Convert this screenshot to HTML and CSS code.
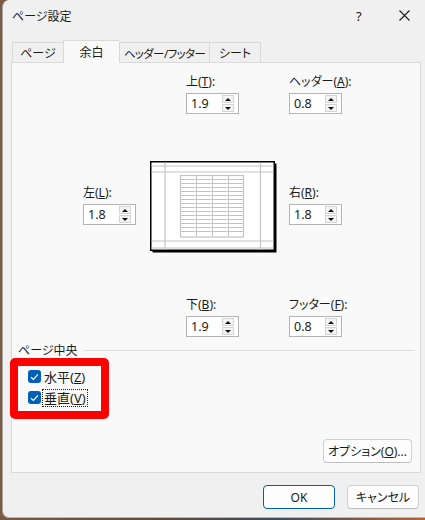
FILE: index.html
```html
<!DOCTYPE html>
<html lang="ja">
<head>
<meta charset="utf-8">
<title>ページ設定</title>
<link rel="stylesheet" href="styles.css">
</head>
<body>
<div class="window">
  <div class="titlebar">
    <span class="title">ページ設定</span>
    <span class="help">?</span>
    <span class="close">
      <svg width="11" height="11" viewBox="0 0 11 11"><path d="M0.5 0.5 L10.5 10.5 M10.5 0.5 L0.5 10.5" stroke="#1a1a1a" stroke-width="1.1" fill="none"/></svg>
    </span>
  </div>

  <div class="tabs">
    <div class="tab tab-page">ページ</div>
    <div class="tab tab-active">余白</div>
    <div class="tab tab-header">ヘッダー/フッター</div>
    <div class="tab tab-sheet">シート</div>
  </div>

  <div class="panel">
    <div class="margins">
      <div class="field f-top">
        <div class="label">上(<u>T</u>):</div>
        <div class="spin"><span class="value">1.9</span><span class="arrows"><span class="btn up"></span><span class="btn down"></span></span></div>
      </div>
      <div class="field f-header">
        <div class="label">ヘッダー(<u>A</u>):</div>
        <div class="spin"><span class="value">0.8</span><span class="arrows"><span class="btn up"></span><span class="btn down"></span></span></div>
      </div>

      <div class="field f-left">
        <div class="label">左(<u>L</u>):</div>
        <div class="spin"><span class="value">1.8</span><span class="arrows"><span class="btn up"></span><span class="btn down"></span></span></div>
      </div>
      <div class="preview">
        <svg width="128" height="92" viewBox="0 0 128 92">
          <rect x="2.5" y="2.5" width="124" height="89" fill="#000"/>
          <rect x="0.75" y="0.75" width="123.5" height="88.5" fill="#fff" stroke="#000" stroke-width="1.5"/>
          <g stroke="#c4c4c4" stroke-width="1.2" fill="none">
            <line x1="1.5" y1="5" x2="123.5" y2="5"/>
            <line x1="1.5" y1="11" x2="123.5" y2="11"/>
            <line x1="1.5" y1="80" x2="123.5" y2="80"/>
            <line x1="1.5" y1="87" x2="123.5" y2="87"/>
            <line x1="15" y1="1.5" x2="15" y2="88.5"/>
            <line x1="110.5" y1="1.5" x2="110.5" y2="88.5"/>
            <rect x="30.5" y="14.5" width="63" height="61.5"/>
          </g>
          <g stroke="#c4c4c4" stroke-width="1" fill="none">
            <line x1="46.5" y1="14.5" x2="46.5" y2="76"/>
            <line x1="62.5" y1="14.5" x2="62.5" y2="76"/>
            <line x1="78.5" y1="14.5" x2="78.5" y2="76"/>
            <line x1="30.5" y1="18.5" x2="93.5" y2="18.5"/>
            <line x1="30.5" y1="22.5" x2="93.5" y2="22.5"/>
            <line x1="30.5" y1="26.5" x2="93.5" y2="26.5"/>
            <line x1="30.5" y1="30.5" x2="93.5" y2="30.5"/>
            <line x1="30.5" y1="34.5" x2="93.5" y2="34.5"/>
            <line x1="30.5" y1="38.5" x2="93.5" y2="38.5"/>
            <line x1="30.5" y1="42.5" x2="93.5" y2="42.5"/>
            <line x1="30.5" y1="46.5" x2="93.5" y2="46.5"/>
            <line x1="30.5" y1="50.5" x2="93.5" y2="50.5"/>
            <line x1="30.5" y1="54.5" x2="93.5" y2="54.5"/>
            <line x1="30.5" y1="58.5" x2="93.5" y2="58.5"/>
            <line x1="30.5" y1="62.5" x2="93.5" y2="62.5"/>
            <line x1="30.5" y1="66.5" x2="93.5" y2="66.5"/>
            <line x1="30.5" y1="70.5" x2="93.5" y2="70.5"/>
          </g>
        </svg>
      </div>
      <div class="field f-right">
        <div class="label">右(<u>R</u>):</div>
        <div class="spin"><span class="value">1.8</span><span class="arrows"><span class="btn up"></span><span class="btn down"></span></span></div>
      </div>

      <div class="field f-bottom">
        <div class="label">下(<u>B</u>):</div>
        <div class="spin"><span class="value">1.9</span><span class="arrows"><span class="btn up"></span><span class="btn down"></span></span></div>
      </div>
      <div class="field f-footer">
        <div class="label">フッター(<u>F</u>):</div>
        <div class="spin"><span class="value">0.8</span><span class="arrows"><span class="btn up"></span><span class="btn down"></span></span></div>
      </div>
    </div>

    <div class="group-title"><span>ページ中央</span><span class="rule"></span></div>

    <div class="highlight">
      <div class="check-row">
        <span class="checkbox"><svg width="9" height="8" viewBox="0 0 9 8"><path d="M1 4.2 L3.4 6.4 L8 1.4" stroke="#fff" stroke-width="1.2" fill="none"/></svg></span>
        <span class="check-label">水平(<u>Z</u>)</span>
      </div>
      <div class="check-row">
        <span class="checkbox"><svg width="9" height="8" viewBox="0 0 9 8"><path d="M1 4.2 L3.4 6.4 L8 1.4" stroke="#fff" stroke-width="1.2" fill="none"/></svg></span>
        <span class="check-label focused">垂直(<u>V</u>)</span>
      </div>
    </div>

    <button class="button options">オプション(<u>O</u>)...</button>
  </div>

  <div class="footer">
    <button class="button ok">OK</button>
    <button class="button cancel">キャンセル</button>
  </div>
</div>
</body>
</html>
```

FILE: styles.css
```css
html, body {
  margin: 0;
  padding: 0;
}

body {
  width: 425px;
  height: 520px;
  overflow: hidden;
  background: linear-gradient(90deg, #7c5a43 0%, #5d4a3c 40%, #3f4b5c 65%, #b3643a 100%);
  font-family: "Noto Sans", "Noto Sans CJK JP", sans-serif;
  font-size: 12px;
  color: #1a1a1a;
  font-feature-settings: "palt";
}

.window {
  box-sizing: border-box;
  margin-left: 2px;
  width: 423px;
  height: 518px;
  background: #f0f0f0;
  border-left: 1px solid #a8a8a8;
  border-bottom: 1px solid #b8b8b8;
  border-top-left-radius: 7px;
  border-bottom-left-radius: 7px;
  display: flex;
  flex-direction: column;
}

/* title bar */
.titlebar {
  height: 31px;
  display: flex;
  align-items: center;
  padding-left: 9px;
}

.title {
  font-size: 12px;
  flex: 1;
  padding-top: 1px;
}

.help {
  font-size: 13px;
  width: 12px;
  margin-right: 31px;
}

.close {
  width: 11px;
  height: 11px;
  display: flex;
  margin-right: 15px;
}

/* tabs */
.tabs {
  margin-top: 9px;
  padding-left: 9px;
  height: 22px;
  display: flex;
  align-items: flex-end;
  position: relative;
  z-index: 1;
}

.tab {
  box-sizing: border-box;
  height: 20px;
  display: flex;
  align-items: center;
  justify-content: center;
  border: 1px solid #d9d9d9;
  border-bottom: none;
  border-right: none;
  background: #f0f0f0;
  font-size: 12px;
  white-space: nowrap;
}

.tab-page { width: 51px; }
.tab-header { width: 90px; font-size: 11.5px; letter-spacing: -0.6px; }
.tab-sheet { width: 52px; border-right: 1px solid #d9d9d9; }

.tab-active {
  width: 56px;
  height: 23px;
  margin-bottom: -1px;
  background: #f9f9f9;
  padding-bottom: 1px;
}

/* tab page */
.panel {
  box-sizing: border-box;
  margin-left: 8px;
  margin-right: 4px;
  height: 411px;
  background: #f9f9f9;
  border: 1px solid #d9d9d9;
  display: flex;
  flex-direction: column;
}

.margins {
  margin-top: 10px;
  display: grid;
  grid-template-columns: 71px 53px 14px 36px 53px 38px 12px 53px;
  grid-template-rows: 41px 46px 92px 44px 41px;
}

.field {
  display: flex;
  flex-direction: column;
}

.label {
  height: 18px;
  line-height: 18px;
  margin-bottom: 2px;
  white-space: nowrap;
}

.f-top { grid-column: 5; grid-row: 1; }
.f-header { grid-column: 8; grid-row: 1; }
.f-left { grid-column: 2; grid-row: 3; margin-top: 24px; }
.f-right { grid-column: 8; grid-row: 3; margin-top: 24px; }
.f-bottom { grid-column: 5; grid-row: 5; }
.f-footer { grid-column: 8; grid-row: 5; }

.preview {
  grid-column: 4 / span 3;
  grid-row: 3;
  margin-top: 1px;
}

.preview svg {
  display: block;
}

.spin {
  box-sizing: border-box;
  width: 53px;
  height: 21px;
  border: 1px solid #b4b4b4;
  background: #fff;
  display: flex;
  align-items: center;
}

.value {
  flex: 1;
  padding-left: 4px;
  font-size: 12.5px;
  color: #1a1a1a;
}

.arrows {
  display: flex;
  flex-direction: column;
  gap: 1px;
  margin-right: 4px;
}

.btn {
  box-sizing: border-box;
  width: 12px;
  height: 8px;
  border: 1px solid #d4d4d4;
  background: #f4f4f4;
  display: flex;
  align-items: center;
  justify-content: center;
}

.btn::after {
  content: "";
  width: 0;
  height: 0;
  border-left: 3px solid transparent;
  border-right: 3px solid transparent;
}

.up::after { border-bottom: 3px solid #111; }
.down::after { border-top: 3px solid #111; }

/* centre on page */
.group-title {
  margin-top: 6px;
  height: 15px;
  line-height: 15px;
  padding-left: 6px;
  display: flex;
  align-items: center;
  gap: 6px;
  margin-right: 5px;
}

.rule {
  flex: 1;
  height: 1px;
  background: #dedede;
}

.highlight {
  box-sizing: border-box;
  margin-left: -2px;
  width: 99px;
  height: 61px;
  border: 8px solid #ff0000;
  border-radius: 5px;
  padding-left: 10px;
}

.check-row {
  height: 21px;
  display: flex;
  align-items: center;
}

.checkbox {
  box-sizing: border-box;
  width: 13px;
  height: 13px;
  border-radius: 3px;
  background: #005fb8;
  display: flex;
  align-items: center;
  justify-content: center;
  margin-right: 3px;
}

.check-label {
  font-size: 13px;
  line-height: 16px;
}

.check-label.focused {
  margin-left: -1px;
  padding: 0 1px;
  outline: 1px dotted #222;
}

/* buttons */
.button {
  box-sizing: border-box;
  font-family: inherit;
  font-size: 12px;
  font-feature-settings: "palt";
  color: #1a1a1a;
  background: #fdfdfd;
  border: 1px solid #d0d0d0;
  border-bottom-color: #bcbcbc;
  border-radius: 4px;
  height: 24px;
  padding: 0;
  margin: 0;
  white-space: nowrap;
}

.options {
  width: 89px;
  align-self: flex-end;
  margin-top: auto;
  margin-right: 8px;
  margin-bottom: 9px;
}

.footer {
  margin-top: 12px;
  display: flex;
  justify-content: flex-end;
  gap: 12px;
  padding-right: 6px;
}

.ok {
  width: 72px;
  border: 1px solid #005fb8;
}

.cancel {
  width: 72px;
}
```
